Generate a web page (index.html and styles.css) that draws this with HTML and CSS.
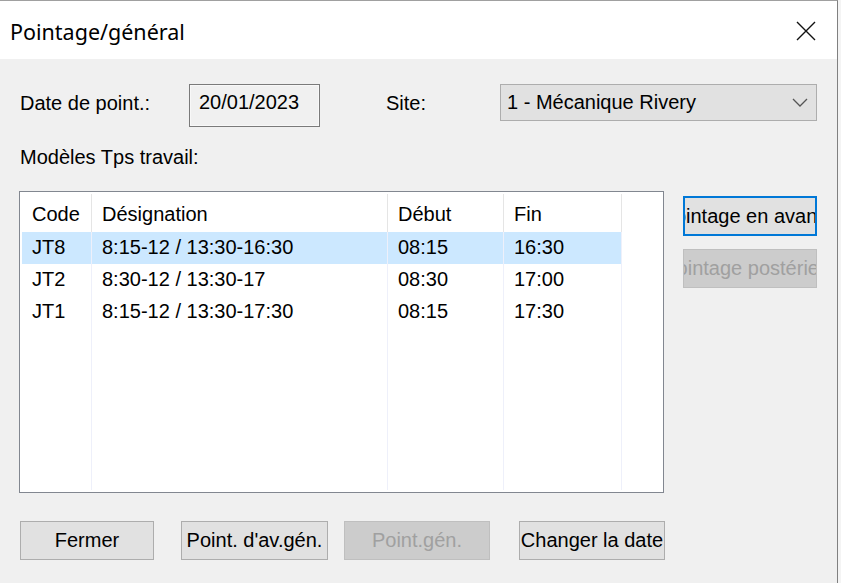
FILE: index.html
```html
<!DOCTYPE html>
<html lang="fr">
<head>
    <meta charset="UTF-8">
    <title>Pointage/général</title>
    <link rel="stylesheet" href="styles.css">
</head>
<body>
<div class="window">
    <div class="title-bar">
        <span class="title-text">Pointage/général</span>
        <a class="close-btn" href="javascript:;">
            <svg width="20" height="20" viewBox="0 0 20 20">
                <path d="M1 1 L19 19 M19 1 L1 19" stroke="#111" stroke-width="1.4" fill="none"/>
            </svg>
        </a>
    </div>
    <div class="content">
        <div class="row-top">
            <label class="lbl lbl-date">Date de point.:</label>
            <div class="date-box">20/01/2023</div>
            <label class="lbl lbl-site">Site:</label>
            <div class="combo">
                <span>1 - Mécanique Rivery</span>
                <svg width="16" height="9" viewBox="0 0 16 9">
                    <path d="M1 1 L8 8 L15 1" stroke="#555" stroke-width="1.3" fill="none"/>
                </svg>
            </div>
        </div>
        <div class="lbl lbl-models">Modèles Tps travail:</div>
        <div class="row-mid">
            <div class="list-box">
                <div class="grid">
                    <div class="cell head">Code</div>
                    <div class="cell head">Désignation</div>
                    <div class="cell head">Début</div>
                    <div class="cell head">Fin</div>
                    <div class="cell rest"></div>

                    <div class="cell sel">JT8</div>
                    <div class="cell sel">8:15-12 / 13:30-16:30</div>
                    <div class="cell sel">08:15</div>
                    <div class="cell sel">16:30</div>
                    <div class="cell rest"></div>

                    <div class="cell">JT2</div>
                    <div class="cell">8:30-12 / 13:30-17</div>
                    <div class="cell">08:30</div>
                    <div class="cell">17:00</div>
                    <div class="cell rest"></div>

                    <div class="cell">JT1</div>
                    <div class="cell">8:15-12 / 13:30-17:30</div>
                    <div class="cell">08:15</div>
                    <div class="cell">17:30</div>
                    <div class="cell rest"></div>

                    <div class="cell"></div>
                    <div class="cell"></div>
                    <div class="cell"></div>
                    <div class="cell"></div>
                    <div class="cell rest"></div>
                </div>
            </div>
            <div class="side-buttons">
                <a class="btn btn-side btn-focus" href="javascript:;"><span>Pointage en avance</span></a>
                <a class="btn btn-side btn-disabled" href="javascript:;"><span>Pointage postérieur</span></a>
            </div>
        </div>
        <div class="row-bottom">
            <a class="btn btn-close" href="javascript:;">Fermer</a>
            <a class="btn btn-avgen" href="javascript:;">Point. d'av.gén.</a>
            <a class="btn btn-gen btn-disabled" href="javascript:;">Point.gén.</a>
            <a class="btn btn-date" href="javascript:;">Changer la date</a>
        </div>
    </div>
</div>
</body>
</html>
```

FILE: styles.css
```css
* {
    box-sizing: border-box;
}

html,
body {
    margin: 0;
    padding: 0;
    background: #f4f4f4;
}

.window {
    width: 838px;
    height: 583px;
    border-top: 1px solid #a0a0a0;
    border-right: 1px solid #808080;
    background: #f0f0f0;
    font-family: "Liberation Sans", Arial, sans-serif;
    font-size: 20px;
    color: #000;
    overflow: hidden;
}

.title-bar {
    height: 58px;
    background: #ffffff;
    display: flex;
    align-items: center;
    justify-content: space-between;
    padding: 0 0 0 10px;
}

.title-text {
    font-family: "Noto Sans", sans-serif;
    font-size: 21.5px;
    padding-top: 3px;
}

.close-btn {
    display: flex;
    width: 48px;
    height: 48px;
    align-items: center;
    justify-content: center;
    margin-right: 7px;
    margin-top: 2px;
}

.content {
    padding: 25px 0 0 19px;
}

.row-top {
    display: flex;
    align-items: flex-start;
    height: 43px;
}

.lbl {
    line-height: 38px;
    white-space: nowrap;
}

.lbl-date {
    width: 170px;
    padding-left: 1px;
}

.date-box {
    width: 131px;
    height: 43px;
    border: 1px solid #7a7a7a;
    box-shadow: inset 0 0 0 1px #f8f8f8;
    padding-left: 9px;
    line-height: 34px;
}

.lbl-site {
    margin-left: 66px;
    width: 114px;
}

.combo {
    width: 317px;
    height: 37px;
    border: 1px solid #adadad;
    background: #e1e1e1;
    display: flex;
    align-items: center;
    justify-content: space-between;
    padding: 0 8px 0 6px;
}

.combo span {
    line-height: 35px;
}

.lbl-models {
    padding-left: 1px;
    margin-top: 11px;
}

.row-mid {
    display: flex;
    margin-top: 15px;
    height: 302px;
}

.list-box {
    width: 645px;
    height: 302px;
    border: 1px solid #828790;
    background: #ffffff;
    padding: 2px;
}

.grid {
    display: grid;
    grid-template-columns: 70px 296px 116px 118px 1fr;
    grid-template-rows: 38px 32px 32px 32px 1fr;
    height: 296px;
}

.cell {
    border-right: 1px solid #eef0fa;
    padding-left: 10px;
    white-space: nowrap;
    line-height: 30px;
}

.cell.head {
    border-right-color: #e5e5e5;
    line-height: 40px;
}

.cell.rest {
    border-right: none;
}

.cell.sel {
    background: #cce8ff;
}

.side-buttons {
    display: flex;
    flex-direction: column;
    margin-left: 19px;
    padding-top: 5px;
    gap: 13px;
}

a {
    text-decoration: none;
    color: #000;
}

.btn {
    display: flex;
    align-items: center;
    justify-content: center;
    height: 39px;
    border: 1px solid #adadad;
    background: #e1e1e1;
    white-space: nowrap;
    overflow: hidden;
}

.btn-side {
    width: 134px;
}

.btn-side span {
    flex-shrink: 0;
}

.btn-focus {
    height: 40px;
    border: 2px solid #0078d7;
}

.btn-disabled {
    background: #cccccc;
    border-color: #bfbfbf;
    color: #a0a0a0;
}

.row-bottom {
    display: flex;
    margin-top: 28px;
    padding-left: 1px;
}

.btn-close {
    width: 134px;
}

.btn-avgen {
    width: 147px;
    margin-left: 27px;
}

.btn-gen {
    width: 146px;
    margin-left: 16px;
}

.btn-date {
    width: 146px;
    margin-left: 29px;
}
```
